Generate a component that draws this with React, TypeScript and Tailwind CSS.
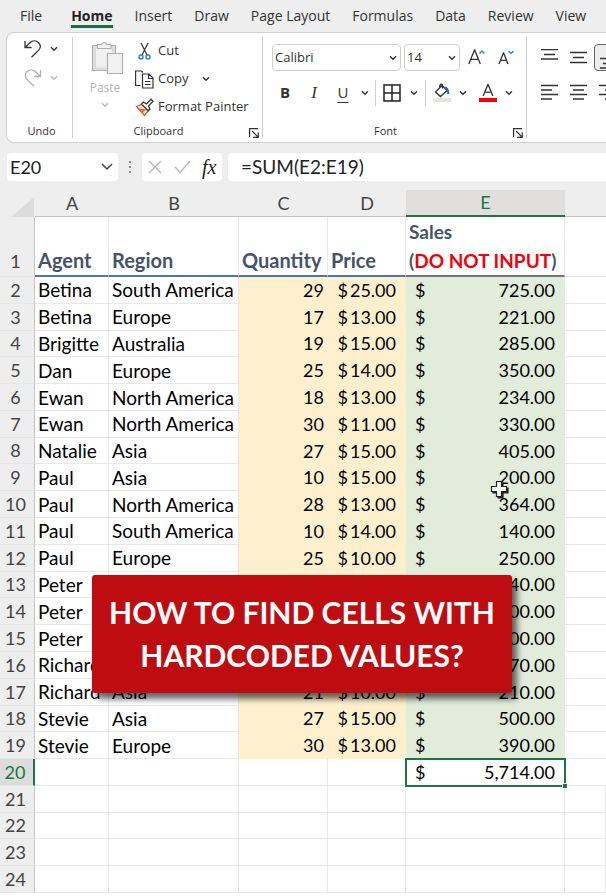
import React from 'react';

const TABS = ['Home', 'Insert', 'Draw', 'Page Layout', 'Formulas', 'Data', 'Review', 'View'];

const COLUMNS = ['A', 'B', 'C', 'D', 'E', ''];

const ROWS = [
  ['Betina', 'South America', '29', '25.00', '725.00'],
  ['Betina', 'Europe', '17', '13.00', '221.00'],
  ['Brigitte', 'Australia', '19', '15.00', '285.00'],
  ['Dan', 'Europe', '25', '14.00', '350.00'],
  ['Ewan', 'North America', '18', '13.00', '234.00'],
  ['Ewan', 'North America', '30', '11.00', '330.00'],
  ['Natalie', 'Asia', '27', '15.00', '405.00'],
  ['Paul', 'Asia', '10', '15.00', '200.00'],
  ['Paul', 'North America', '28', '13.00', '364.00'],
  ['Paul', 'South America', '10', '14.00', '140.00'],
  ['Paul', 'Europe', '25', '10.00', '250.00'],
  ['Peter', '', '', '', '240.00'],
  ['Peter', '', '', '', '300.00'],
  ['Peter', '', '', '', '300.00'],
  ['Richard', '', '', '', '270.00'],
  ['Richard', 'Asia', '21', '10.00', '210.00'],
  ['Stevie', 'Asia', '27', '15.00', '500.00'],
  ['Stevie', 'Europe', '30', '13.00', '390.00'],
];

const Chevron = ({ className = 'text-[#333]' }: { className?: string }) => (
  <svg className={`pointer-events-none shrink-0 ${className}`} width="8" height="6" viewBox="0 0 8 6" fill="none" stroke="currentColor" strokeWidth="1.4">
    <path d="M1 1.2 4 4.2 7 1.2" />
  </svg>
);

const Launcher = ({ label }: { label: string }) => (
  <button aria-label={label} className="absolute right-[3px] bottom-0">
    <svg width="10" height="10" viewBox="0 0 10 10" fill="none" stroke="#333" strokeWidth="1.2">
      <path d="M.6 9V.6H9M3 3l6 6M9.3 4.2v5.2H4" />
    </svg>
  </button>
);

const Group = ({ title, width, launcher, children }: { title: string; width: string; launcher?: boolean; children?: React.ReactNode }) => (
  <section className={`relative my-1 flex shrink-0 flex-col border-r border-[#cfcfcf] ${width}`}>
    <div className="flex-1">{children}</div>
    <h2 className={`text-center text-[11px] leading-[14px] ${launcher ? 'pr-[18px]' : 'pl-1'}`}>{title}</h2>
    {launcher && <Launcher label={`${title} settings`} />}
  </section>
);

const Lines = ({ d }: { d: string }) => (
  <svg width="17" height="17" viewBox="0 0 17 17" fill="none" stroke="#333" strokeWidth="1.3">
    <path d={d} />
  </svg>
);

const Ribbon = () => (
  <div className="ml-[6px] flex h-[111px] overflow-hidden rounded-l-lg border border-r-0 border-[#cfcfcf] bg-white">
    <Group title="Undo" width="w-[66px]">
      <div className="flex flex-col gap-[11px] pt-[3px] pl-[17px]">
        <button aria-label="Undo" className="flex items-center gap-2">
          <svg width="18" height="18" viewBox="0 0 18 18" fill="none" stroke="#333" strokeWidth="1.3">
            <path d="M1 1v6.500h6.500M1.300 7.200 6 2.700c2.500-2.300 6-2.400 8.300-.3 2.500 2.300 2.500 5.500.2 8L7.500 17.300" />
          </svg>
          <Chevron />
        </button>
        <button aria-label="Redo" className="flex items-center gap-2">
          <svg width="18" height="18" viewBox="0 0 18 18" fill="none" stroke="#b0b0b0" strokeWidth="1.3">
            <path d="M16.500 1v6.500H10M16.200 7.200 11.500 2.700C9 .4 5.500.3 3.200 2.400.7 4.700.7 7.900 3 10.400l7 6.900" />
          </svg>
          <Chevron className="text-[#b8b8b8]" />
        </button>
      </div>
    </Group>

    <Group title="Clipboard" width="w-[190px]" launcher>
      <div className="flex pl-[14px]">
        <button className="flex w-[36px] flex-col items-center pt-[3px] text-[12px] leading-4 text-[#b5b5b5]">
          <svg className="ml-1 shrink-0" width="33" height="34" viewBox="0 0 33 34" fill="none" stroke="#b0b0b0" strokeWidth="1.2">
            <path d="M1.500 5.500h23v25h-23z" fill="#dcdcdc" />
            <path d="M5 8.500h16v19H5z" fill="#f0f0f0" stroke="none" />
            <path d="M6.500 8.500v-4h4a3 3 0 0 1 5.500 0h4v4z" fill="#f4f4f4" />
            <path d="M16.500 13.500h15v20h-15z" fill="#f2f2f2" />
          </svg>
          <span className="mt-[6px]">Paste</span>
          <Chevron className="mt-[6px] text-[#b8b8b8]" />
        </button>
        <div className="ml-3 flex flex-col text-[13px]">
          <button className="flex h-[28px] items-center gap-1">
            <svg width="19" height="19" viewBox="0 0 19 19" fill="none" stroke="#333" strokeWidth="1.2">
              <path d="M6 1l6 12M13 1 7 13" />
              <circle cx="6" cy="15" r="2" stroke="#2b7cd3" strokeWidth="1.400" />
              <circle cx="13" cy="15" r="2" stroke="#2b7cd3" strokeWidth="1.400" />
            </svg>
            Cut
          </button>
          <button className="flex h-[28px] items-center gap-1">
            <svg width="19" height="19" viewBox="0 0 19 19" fill="none" stroke="#333" strokeWidth="1.2">
              <path d="M5.500 15.500H.6V1h6l1.400 1.500M7.500 4h6.500l4 4v10H7.500zM13.500 4v4.500H18M10 11.500h5.500M10 14.500h5.500" />
            </svg>
            Copy
            <Chevron className="ml-[10px] text-[#333]" />
          </button>
          <button className="flex h-[28px] items-center gap-1 whitespace-nowrap">
            <svg width="19" height="19" viewBox="0 0 19 19" fill="none">
              <path d="M1.500 8.500 7.500 6l6 6.500L9.500 17.500z" fill="#fde6c8" stroke="#dd5530" strokeWidth="1.300" />
              <path d="M4 11.500 9.500 12l-3 2.300" stroke="#dd5530" strokeWidth="1.400" />
              <path d="m6.500 6 2-2 3 2L16 1.200l2 2L13.500 8l1.500 3-1.800 1.800z" fill="#fff" stroke="#333" strokeWidth="1.300" />
            </svg>
            Format Painter
          </button>
        </div>
      </div>
    </Group>

    <Group title="Font" width="w-[264px]" launcher>
      <div className="pt-[7px] pl-[9px]">
        <div className="flex items-center">
          <label className="flex h-[27px] w-[129px] items-center rounded border border-[#cfcfcf] pr-[3px]">
            <select aria-label="Font name" className="w-full appearance-none pl-[2px] text-[13px] outline-none">
              <option>Calibri</option>
            </select>
            <Chevron />
          </label>
          <label className="ml-[3px] flex h-[27px] w-[56px] items-center rounded border border-[#cfcfcf] pr-[3px]">
            <select aria-label="Font size" className="w-full appearance-none pl-[2px] text-[13px] outline-none">
              <option>14</option>
            </select>
            <Chevron />
          </label>
          <button aria-label="Increase font size" className="ml-2">
            <svg width="18" height="18" viewBox="0 0 18 18" fill="none" stroke="#333" strokeWidth="1.3">
              <path d="M.8 15 6.500 1h.2l5.600 14M2.700 10.300h7.800" />
              <path d="m11.500 4.500 2.500-2.500 2.500 2.500" stroke="#2b7cd3" />
            </svg>
          </button>
          <button aria-label="Decrease font size" className="ml-3">
            <svg width="18" height="18" viewBox="0 0 18 18" fill="none" stroke="#333" strokeWidth="1.3">
              <path d="M1 15 5.400 4h.2L10 15M2.500 11.300h6.200" />
              <path d="m10.500 2 2.500 2.500L15.500 2" stroke="#2b7cd3" />
            </svg>
          </button>
        </div>
        <div className="mt-2 flex h-[27px] items-center text-[15px]">
          <button aria-label="Bold" className="w-[26px] font-bold">B</button>
          <button aria-label="Italic" className="ml-[3px] w-[26px] font-['Liberation_Serif',serif] text-[17px] italic">I</button>
          <button aria-label="Underline" className="ml-[2px] w-[28px] underline underline-offset-4">U</button>
          <Chevron className="ml-1 text-[#333]" />
          <div className="mr-[7px] ml-[6px] h-[26px] w-px bg-[#cfcfcf]" />
          <button aria-label="Borders" className="flex items-center gap-[9px]">
            <svg width="18" height="18" viewBox="0 0 18 18" fill="none" stroke="#222" strokeWidth="1.5">
              <path d="M1 1h16v16H1zM9 1v16M1 9h16" />
            </svg>
            <Chevron />
          </button>
          <div className="mr-[7px] ml-[7px] h-[26px] w-px bg-[#cfcfcf]" />
          <button aria-label="Fill color" className="flex items-center gap-2">
            <svg width="18" height="19" viewBox="0 0 18 19" fill="none" stroke="#333" strokeWidth="1.300">
              <path d="M9.500 5.500V2.200C9.500.8 7.500.8 7 2.200L6.500 4.500M9 2.500 2.500 9l5 4.500L14 7.500z" />
              <path d="M11.500 4.500c3 .2 3.800 2.500 3.800 6.500" stroke="#1f6fc4" strokeWidth="2" />
              <path d="M0 15h18v4H0z" fill="#dfe7d8" stroke="none" />
            </svg>
            <Chevron />
          </button>
          <button aria-label="Font color" className="ml-3 flex items-center gap-2">
            <svg width="18" height="19" viewBox="0 0 18 19" fill="none" stroke="#333" strokeWidth="1.300">
              <path d="M4.200 13 8.900 1.500h.2L13.800 13M5.800 9.200h6.400" />
              <path d="M0 15h18v4H0z" fill="#fb0007" stroke="none" />
            </svg>
            <Chevron />
          </button>
        </div>
      </div>
    </Group>

    <div className="flex shrink-0 flex-col gap-2 pt-[11px] pl-[9px]">
      <div className="flex h-[27px] items-center">
        <button aria-label="Top align" className="w-[29px] pl-[5px]"><Lines d="M0 .7h17M3 5.500h11M0 10h17" /></button>
        <button aria-label="Middle align" className="w-[29px] pl-[5px]"><Lines d="M0 3.500h17M3 8.500h11M0 13.500h17" /></button>
        <button aria-label="Bottom align" className="h-[27px] w-[29px] rounded border border-[#666] bg-[#ededed] pt-[5px] pl-[5px]"><Lines d="M0 6.500h17M3 11.500h11M0 16h17" /></button>
      </div>
      <div className="flex h-[27px] items-center">
        <button aria-label="Align left" className="w-[29px] pl-[5px]"><Lines d="M0 1.500h17M0 6h11M0 10.500h17M0 15h11" /></button>
        <button aria-label="Center" className="w-[29px] pl-[5px]"><Lines d="M0 1.500h17M3 6h11M0 10.500h17M3 15h11" /></button>
        <button aria-label="Align right" className="w-[29px] pl-[5px]"><Lines d="M0 1.500h17M6 6h11M0 10.500h17M6 15h11" /></button>
      </div>
    </div>
  </div>
);

const FormulaBar = () => (
  <div className="mt-[10px] mb-[9px] ml-[7px] flex h-7 text-[19px] text-[#222]">
    <label className="flex w-[111px] items-center rounded bg-white pr-[5px]">
      <input aria-label="Name box" defaultValue="E20" className="w-full min-w-0 pl-[3px] text-[18px] outline-none" />
      <svg className="shrink-0" width="12" height="8" viewBox="0 0 12 8" fill="none" stroke="#444" strokeWidth="1.500">
        <path d="m1 1 5 5 5-5" />
      </svg>
    </label>
    <svg className="mx-[10px] self-center" width="4" height="14" viewBox="0 0 4 14" fill="#8a8a8a">
      <path d="M1 1h2v2H1zM1 6h2v2H1zM1 11h2v2H1z" />
    </svg>
    <div className="flex w-[80px] items-center gap-3 rounded bg-white pl-[6px]">
      <button aria-label="Cancel">
        <svg width="14" height="14" viewBox="0 0 14 14" fill="none" stroke="#b5b5b5" strokeWidth="1.300">
          <path d="m1 1 12 12M13 1 1 13" />
        </svg>
      </button>
      <button aria-label="Enter">
        <svg width="17" height="14" viewBox="0 0 17 14" fill="none" stroke="#b5b5b5" strokeWidth="1.300">
          <path d="m1 7 5 5.500L16 1" />
        </svg>
      </button>
      <button aria-label="Insert function" className="-ml-px font-['Liberation_Serif',serif] text-[20px] leading-6 italic">fx</button>
    </div>
    <input aria-label="Formula" defaultValue="=SUM(E2:E19)" className="ml-[6px] min-w-0 flex-1 rounded-l bg-white pl-[13px] outline-none" />
  </div>
);

const RowHead = ({ n }: { n: number }) => (
  <th
    scope="row"
    className={`border-r border-b border-b-[#e6e6e6] pr-[3px] text-center align-bottom font-normal ${n === 1 ? 'leading-[29px]' : ''} ${
      n === 20 ? 'border-r-2 border-r-[#217346] bg-[#dcdcdc] text-[#217346]' : 'border-r-[#c4c4c4] bg-[#eeeeee] text-[#444]'
    }`}
  >
    {n}
  </th>
);

const CELL = 'border-r border-b border-[#e8e8e8] whitespace-nowrap';
const HEAD = 'border-r border-r-[#e8e8e8] border-b-2 border-b-[#4f74b8] pl-[3px] text-left align-bottom text-[20px] font-bold leading-[29px] whitespace-nowrap';

const Sheet = () => (
  <div className="grid flex-1 bg-white pb-[3px]">
    <table className="h-full w-full table-fixed border-separate border-spacing-0 text-[18px] leading-[25px] text-black">
      <colgroup>
        <col className="w-[35px]" />
        <col className="w-[74px]" />
        <col className="w-[130px]" />
        <col className="w-[89px]" />
        <col className="w-[78px]" />
        <col className="w-[159px]" />
        <col />
      </colgroup>
      <thead>
        <tr className="h-[27px] bg-[#eeeeee] text-[#444]">
          <th className="align-bottom">
            <svg className="ml-auto mr-px" width="23" height="20" viewBox="0 0 23 20" fill="#dcdcdc">
              <path d="M23 0v20H0z" />
            </svg>
          </th>
          {COLUMNS.map((c, i) => (
            <th key={i} scope="col" className={`font-normal ${c === 'E' ? 'border-b-2 border-[#217346] bg-[#e0dfde] text-[#217346]' : 'border-b border-[#c4c4c4]'}`}>
              {c}
            </th>
          ))}
        </tr>
      </thead>
      <tbody>
        <tr className="h-[59px] text-[#44546a]">
          <RowHead n={1} />
          <td className={HEAD}>Agent</td>
          <td className={HEAD}>Region</td>
          <td className={HEAD}>Quantity</td>
          <td className={HEAD}>Price</td>
          <td className="border-r border-b-2 border-r-[#e8e8e8] border-b-[#74747c] pl-[3px] text-left align-bottom text-[19px] leading-[29px] font-bold whitespace-nowrap">
            Sales<br />(<span className="text-[#f4000a]">DO NOT INPUT</span>)
          </td>
          <td className="border-b border-[#e8e8e8]" />
        </tr>
        {ROWS.map(([agent, region, qty, price, sales], i) => (
          <tr key={i}>
            <RowHead n={i + 2} />
            <td className={`${CELL} pl-[3px] text-[19px]`}>{agent}</td>
            <td className={`${CELL} pl-[3px] text-[19px]`}>{region}</td>
            <td className="bg-[#fff0cd] pr-1 text-right">{qty}</td>
            <td className="bg-[#fff0cd] pr-[10px]">
              {price && <div className="flex justify-end gap-[2px]"><span>$</span><span>{price}</span></div>}
            </td>
            <td className="bg-[#e1ecda] pr-[10px] pl-[9px]">
              <div className="flex justify-between"><span>$</span><span>{sales}</span></div>
            </td>
            <td className="border-b border-[#e8e8e8]" />
          </tr>
        ))}
        <tr>
          <RowHead n={20} />
          <td className={CELL} />
          <td className={CELL} />
          <td className={CELL} />
          <td className={CELL} />
          <td className="relative pr-[10px] pl-[9px]">
            <div className="flex justify-between"><span>$</span><span>5,714.00</span></div>
            <div className="absolute -inset-px border-2 border-[#217346]" />
            <div className="absolute -right-[2px] -bottom-[2px] h-[5px] w-[5px] border-t border-l border-white bg-[#217346]" />
          </td>
          <td className="border-b border-[#e8e8e8]" />
        </tr>
        {[21, 22, 23, 24].map((n) => (
          <tr key={n}>
            <RowHead n={n} />
            {COLUMNS.map((_, i) => <td key={i} className={CELL} />)}
          </tr>
        ))}
      </tbody>
    </table>
  </div>
);

export default function App() {
  return (
    <div className="relative flex min-h-screen flex-col overflow-hidden bg-[#eeeeee] font-['Lato',sans-serif]">
      <header className="font-['Open_Sans',sans-serif] text-[#333]">
        <nav className="flex h-8 pt-[6px] pl-5 text-[14px] leading-5 whitespace-nowrap">
          <a href="#file" className="mr-[29px]">File</a>
          <div className="flex gap-[22px]">
            {TABS.map((tab) => (
              <a key={tab} href="#tab" className={tab === 'Home' ? 'h-[22px] border-b-[3px] border-[#1e6e4a] font-bold text-[#222]' : ''}>
                {tab}
              </a>
            ))}
          </div>
        </nav>
        <Ribbon />
      </header>
      <FormulaBar />
      <Sheet />

      <div className="absolute top-[575px] left-[92px] w-[420px] rounded-[3px] bg-[#bf0c10] py-4 text-center text-[30px] leading-[43px] font-bold text-white shadow-[5px_6px_6px_rgba(0,0,0,0.6)]">
        HOW TO FIND CELLS WITH<br />HARDCODED VALUES?
      </div>

      <svg className="absolute top-[480px] left-[490px]" width="20" height="20" viewBox="0 0 20 20" fill="#fff" stroke="#222" strokeWidth="1.200">
        <path d="M8 3h5v5h5v5h-5v5H8v-5H3V8h5z" fill="#222" />
        <path d="M6.500 1.500h5v5h5v5h-5v5h-5v-5h-5v-5h5z" />
      </svg>
    </div>
  );
}
